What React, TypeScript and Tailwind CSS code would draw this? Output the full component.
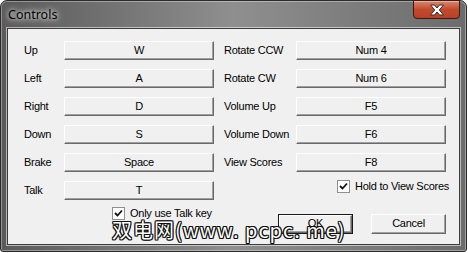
import React from 'react';

const leftRows = [
  { label: 'Up', key: 'W' },
  { label: 'Left', key: 'A' },
  { label: 'Right', key: 'D' },
  { label: 'Down', key: 'S' },
  { label: 'Brake', key: 'Space' },
  { label: 'Talk', key: 'T' },
];

const rightRows = [
  { label: 'Rotate CCW', key: 'Num 4' },
  { label: 'Rotate CW', key: 'Num 6' },
  { label: 'Volume Up', key: 'F5' },
  { label: 'Volume Down', key: 'F6' },
  { label: 'View Scores', key: 'F8' },
];

const KeyButton = ({ text, className = '' }: { text: string; className?: string }) => (
  <div
    className={`h-[19px] shrink-0 flex items-center justify-center bg-[#f0f0f0] border-t border-l border-t-white border-l-white border-r border-b border-r-[#696969] border-b-[#696969] shadow-[inset_-1px_-1px_0_#a0a0a0] text-[11px] text-black ${className}`}
  >
    {text}
  </div>
);

const Check = ({ label }: { label: string }) => (
  <div className="flex items-center gap-[5px] text-[11px] text-black whitespace-nowrap">
    <div className="w-[13px] h-[13px] shrink-0 bg-white border border-[#8f8f8f] flex items-center justify-center">
      <svg width="9" height="9" viewBox="0 0 9 9">
        <path d="M1 4 L3.5 6.5 L8 1.5" fill="none" stroke="#111" strokeWidth="1.8" />
      </svg>
    </div>
    <span>{label}</span>
  </div>
);

const Row = ({ label, keyName, labelW }: { label: string; keyName: string; labelW: string }) => (
  <div className="flex items-center">
    <span className={`${labelW} shrink-0 overflow-visible text-[11px] text-black whitespace-nowrap`}>{label}</span>
    <KeyButton text={keyName} className="w-[150px]" />
  </div>
);

export default function App() {
  return (
    <div className="w-[468px] h-[253px] bg-white font-['Liberation_Sans',Arial,sans-serif] tracking-[-0.25px]">
      <div className="relative w-[467px] h-[252px] rounded-t-[7px] rounded-b-[3px] border border-[#2b2b2b] bg-gradient-to-r from-[#5a5a5a] via-[#8f8f8f] to-[#6c6c6c] flex flex-col px-[6px] pb-[6px] shadow-[inset_0_0_0_1px_rgba(255,255,255,0.35)]">
        {/* title bar */}
        <div className="h-[27px] flex items-start justify-between">
          <span className="mt-[5px] ml-[1px] text-[12.5px] tracking-normal text-black font-['Noto_Sans',sans-serif] [text-shadow:0_0_8px_rgba(255,255,255,0.9),0_0_4px_rgba(255,255,255,0.9)]">
            Controls
          </span>
          <div className="w-[47px] h-[19px] -mt-[1px] rounded-b-[4px] border border-[#3a1a12] bg-gradient-to-b from-[#d98670] via-[#c24a2c] to-[#b8402a] flex items-center justify-center shadow-[inset_0_1px_0_rgba(255,255,255,0.4)]">
            <svg width="16" height="12" viewBox="0 0 16 12">
              <path
                d="M1.5 1 L5.5 1 L8 4 L10.5 1 L14.5 1 L10.3 6 L14.5 11 L10.5 11 L8 8 L5.5 11 L1.5 11 L5.7 6 Z"
                fill="#ffffff"
                stroke="#3a2a28"
                strokeWidth="1"
                strokeLinejoin="round"
              />
            </svg>
          </div>
        </div>

        {/* client area */}
        <div className="flex-1 bg-[#f0f0f0] border border-[#3c3c3c] shadow-[0_0_0_1px_rgba(255,255,255,0.55)] flex pt-[12px] pl-[16px]">
          <div className="flex flex-col">
            <div className="flex flex-col gap-[9px]">
              {leftRows.map((r) => (
                <Row key={r.label} label={r.label} keyName={r.key} labelW="w-[40px]" />
              ))}
            </div>
            <div className="mt-[5px] pl-[88px]">
              <Check label="Only use Talk key" />
            </div>
          </div>

          <div className="flex flex-col ml-[10px]">
            <div className="flex flex-col gap-[9px]">
              {rightRows.map((r) => (
                <Row key={r.label} label={r.label} keyName={r.key} labelW="w-[72px]" />
              ))}
            </div>
            <div className="mt-[6px] pl-[113px]">
              <Check label="Hold to View Scores" />
            </div>
            <div className="mt-[19px] pl-[54px] flex gap-[18px]">
              <div className="w-[75px] h-[20px] border border-[#1a1a1a] flex">
                <KeyButton text="OK" className="flex-1 h-full" />
              </div>
              <KeyButton text="Cancel" className="w-[75px] h-[20px]" />
            </div>
          </div>
        </div>

        {/* watermark */}
        <div className="absolute left-[111px] top-[217px] text-[20px] leading-[24px] tracking-[1px] text-white whitespace-nowrap font-['Noto_Sans_CJK_SC',sans-serif] [text-shadow:1px_0_0_#111,-1px_0_0_#111,0_1px_0_#111,0_-1px_0_#111,1px_1px_0_#111,-1px_-1px_0_#111,1px_-1px_0_#111,-1px_1px_0_#111]">
          双电网(www. pcpc. me)
        </div>
      </div>
    </div>
  );
}
